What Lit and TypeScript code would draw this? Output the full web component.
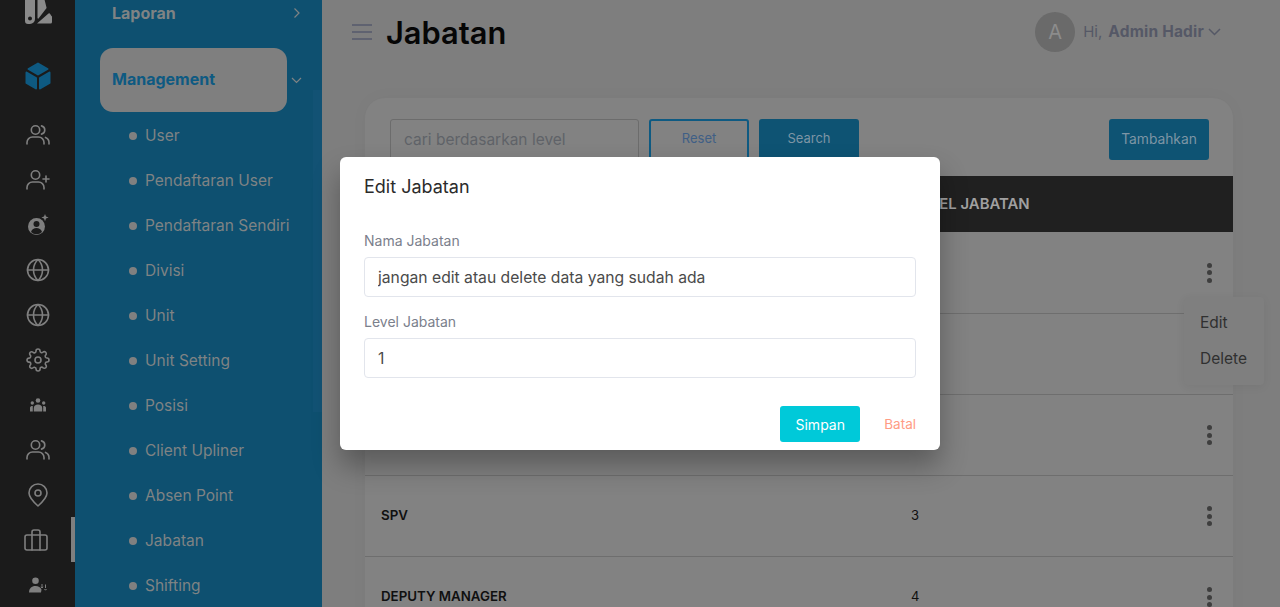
import { LitElement, html, css, svg } from "lit";
import { customElement } from "lit/decorators.js";

// outline icons for the dark rail, all on a 24 box
const line = (body: unknown, size = 24) => html`<svg
  width=${size}
  height=${size}
  viewBox="0 0 24 24"
  fill="none"
  stroke="currentColor"
  stroke-width="1.6"
  stroke-linecap="round"
  stroke-linejoin="round"
>
  ${body}
</svg>`;

const usersIcon = line(svg`
  <circle cx="9.5" cy="7" r="4.2" />
  <path d="M1 21v-1.5a5.5 5.5 0 0 1 5.5-5.5h6a5.5 5.5 0 0 1 5.5 5.5V21" />
  <path d="M15.5 2.9a4.2 4.2 0 0 1 0 8.2" />
  <path d="M19.5 14.4a5.5 5.5 0 0 1 3.5 5.1V21" />
`);
const userPlusIcon = line(svg`
  <circle cx="9.5" cy="7" r="4.2" />
  <path d="M1 21v-1.5a5.5 5.5 0 0 1 5.5-5.5h6a5.5 5.5 0 0 1 5.5 5.5V21" />
  <path d="M20 8v6M17 11h6" />
`);
const userStarIcon = html`<svg width="22" height="22" viewBox="0 0 22 22">
  <circle cx="9.5" cy="12.5" r="8.5" fill="currentColor" />
  <circle cx="9.5" cy="10" r="3" fill="#1b1b1b" />
  <path d="M4 18c1-3 3-4 5.500-4s4.500 1 5.500 4a8 8 0 0 1-11 0z" fill="#1b1b1b" />
  <path d="M18 0l1 2.600 2.600 1-2.600 1-1 2.600-1-2.600-2.600-1 2.600-1z" fill="currentColor" />
</svg>`;
const globeIcon = line(svg`
  <circle cx="12" cy="12" r="10.500" />
  <path d="M1.500 12h21" />
  <path d="M12 1.500c3 2.800 4.500 6.300 4.500 10.500s-1.500 7.700-4.500 10.500c-3-2.800-4.500-6.300-4.500-10.500s1.500-7.700 4.500-10.500z" />
`);
const gearIcon = line(svg`
  <circle cx="12" cy="12" r="3" />
  <path d="M19.400 15a1.650 1.650 0 0 0 .33 1.820l.06.06a2 2 0 0 1 0 2.830 2 2 0 0 1-2.830 0l-.06-.06a1.650 1.650 0 0 0-1.820-.33 1.650 1.650 0 0 0-1 1.510V21a2 2 0 0 1-2 2 2 2 0 0 1-2-2v-.09A1.650 1.650 0 0 0 9 19.400a1.650 1.650 0 0 0-1.820.33l-.06.06a2 2 0 0 1-2.830 0 2 2 0 0 1 0-2.830l.06-.06a1.650 1.650 0 0 0 .33-1.820 1.650 1.650 0 0 0-1.510-1H3a2 2 0 0 1-2-2 2 2 0 0 1 2-2h.09A1.650 1.650 0 0 0 4.600 9a1.650 1.650 0 0 0-.33-1.820l-.06-.06a2 2 0 0 1 0-2.830 2 2 0 0 1 2.830 0l.06.06a1.650 1.650 0 0 0 1.820.33H9a1.650 1.650 0 0 0 1-1.510V3a2 2 0 0 1 2-2 2 2 0 0 1 2 2v.09a1.650 1.650 0 0 0 1 1.510 1.650 1.650 0 0 0 1.820-.33l.06-.06a2 2 0 0 1 2.830 0 2 2 0 0 1 0 2.830l-.06.06a1.650 1.650 0 0 0-.33 1.820V9a1.650 1.650 0 0 0 1.510 1H21a2 2 0 0 1 2 2 2 2 0 0 1-2 2h-.09a1.650 1.650 0 0 0-1.510 1z" />
`);
const groupIcon = html`<svg width="16" height="14" viewBox="0 0 16 14" fill="currentColor">
  <circle cx="8" cy="2.500" r="2.300" />
  <circle cx="2.300" cy="5" r="1.700" />
  <circle cx="13.700" cy="5" r="1.700" />
  <path d="M3.800 13.500v-3.500c0-2 1.800-3.500 4.200-3.500s4.200 1.500 4.200 3.500v3.500z" />
  <path d="M0 13.500v-3.800c0-1 1-1.700 2.800-1.700v5.500zM16 13.500v-3.800c0-1-1-1.700-2.800-1.700v5.500z" />
</svg>`;
const pinIcon = line(svg`
  <path d="M12 23c-5-4.500-9-8.500-9-13a9 9 0 0 1 18 0c0 4.500-4 8.500-9 13z" />
  <circle cx="12" cy="10" r="3" />
`);
const caseIcon = line(svg`
  <rect x="1" y="7" width="22" height="15" rx="2" />
  <path d="M8 22V4a2 2 0 0 1 2-2h4a2 2 0 0 1 2 2v18" />
`);
const userMoveIcon = html`<svg width="18" height="16" viewBox="0 0 18 16" fill="currentColor">
  <circle cx="6.500" cy="3.800" r="3.300" />
  <path d="M0 15.500c0-4 2.500-6.500 6.500-6.500 3 0 5 1.200 6 3.500l-.5 3z" />
  <path
    d="M13 7v4M12 9.800l1 1.200 1-1.200M16.500 11V7.500M15.500 12l1 1.200 1-1.200"
    fill="none"
    stroke="currentColor"
    stroke-width="1"
  />
</svg>`;

const railIcons = [
  usersIcon,
  userPlusIcon,
  userStarIcon,
  globeIcon,
  globeIcon,
  gearIcon,
  groupIcon,
  usersIcon,
  pinIcon,
  caseIcon,
  userMoveIcon,
];

const subMenu = [
  "User",
  "Pendaftaran User",
  "Pendaftaran Sendiri",
  "Divisi",
  "Unit",
  "Unit Setting",
  "Posisi",
  "Client Upliner",
  "Absen Point",
  "Jabatan",
  "Shifting",
];

// the first rows sit behind the dialog, only the last two can be read
const rows = [
  ["", ""],
  ["", ""],
  ["", ""],
  ["SPV", "3"],
  ["DEPUTY MANAGER", "4"],
];

@customElement("app-root")
export class AppRoot extends LitElement {
  static styles = css`
    :host {
      display: flex;
      height: 607px;
      overflow: hidden;
      position: relative;
      background: #7e7e7e;
      font-family: Inter, "Noto Sans", sans-serif;
    }
    * {
      box-sizing: border-box;
    }

    /* icon rail */
    .rail {
      width: 75px;
      flex: none;
      background: #1b1b1b;
      color: #7f7f7f;
      display: flex;
      flex-direction: column;
      align-items: center;
    }
    .logo {
      height: 24px;
      overflow: hidden;
      display: flex;
      align-items: flex-end;
      margin-bottom: 30px;
    }
    .cube {
      height: 46px;
      margin-bottom: 13px;
      display: flex;
      align-items: center;
    }
    .rail-item {
      width: 100%;
      height: 45px;
      flex: none;
      display: flex;
      align-items: center;
      justify-content: center;
    }
    .rail-item.current {
      border-right: 4px solid #7f7f7f;
    }

    /* submenu panel */
    .side {
      width: 247px;
      flex: none;
      background: #0e5070;
      position: relative;
      padding-left: 25px;
      color: #7f8384;
    }
    .thumb {
      position: absolute;
      right: 0;
      top: 90px;
      width: 9px;
      height: 322px;
      background: #125274;
    }
    .top-item {
      height: 28px;
      display: flex;
      align-items: center;
      justify-content: space-between;
      padding: 0 21px 2px 12px;
      font-size: 16px;
      font-weight: 700;
    }
    .active-row {
      display: flex;
      align-items: center;
      margin-top: 20px;
    }
    .active {
      width: 187px;
      height: 64px;
      border-radius: 13px;
      background: #7f7f7f;
      color: #0e5a82;
      font-size: 16px;
      font-weight: 700;
      display: flex;
      align-items: center;
      padding: 0 0 2px 12px;
    }
    .active-row svg {
      margin-left: 4px;
    }
    .sub {
      list-style: none;
      margin: 1px 0 0;
      padding: 0 0 0 29px;
    }
    .sub li {
      height: 45px;
      display: flex;
      align-items: center;
      gap: 8px;
      font-size: 15.500px;
    }
    .sub li::before {
      content: "";
      width: 8px;
      height: 8px;
      border-radius: 50%;
      background: #808080;
    }

    /* main column */
    .main {
      flex: 1;
      min-width: 0;
      padding: 0 47px 0 30px;
    }
    .topbar {
      height: 65px;
      display: flex;
      align-items: center;
      margin-bottom: 33px;
    }
    .burger {
      width: 20px;
      height: 16px;
      margin-top: -2px;
      margin-right: 14px;
      border-top: 2px solid #5f6270;
      border-bottom: 2px solid #5f6270;
      position: relative;
    }
    .burger::after {
      content: "";
      position: absolute;
      left: 0;
      right: 0;
      top: 5px;
      height: 2px;
      background: #5f6270;
    }
    h1 {
      margin: 0;
      font-size: 30.800px;
      font-weight: 600;
      color: #060606;
    }
    .account {
      margin-left: auto;
      margin-right: 12px;
      padding-bottom: 2px;
      display: flex;
      align-items: center;
      font-size: 15px;
      color: #555866;
    }
    .avatar {
      width: 40px;
      height: 40px;
      border-radius: 50%;
      background: #6a6a6a;
      color: #8c8c8c;
      font-size: 20px;
      display: flex;
      align-items: center;
      justify-content: center;
      margin-right: 8px;
    }
    .account b {
      margin-left: 6px;
      margin-right: 4px;
      font-size: 15.500px;
      letter-spacing: 0.2px;
      font-weight: 700;
    }

    /* card */
    .card {
      background: #828282;
      border-radius: 20px 20px 0 0;
      box-shadow: 0 0 18px rgba(0, 0, 0, 0.03);
      height: 560px;
      margin-left: 13px;
    }
    .toolbar {
      display: flex;
      gap: 10px;
      padding: 21px 24px 16px 25px;
    }
    .search {
      width: 249px;
      height: 41px;
      padding: 0 13px;
      border: 1px solid #6c6c6c;
      border-radius: 3px;
      background: transparent;
      font: inherit;
      font-size: 15.500px;
      outline: none;
    }
    .search::placeholder {
      color: #5f6268;
    }
    .btn {
      width: 100px;
      height: 41px;
      border-radius: 3px;
      border: 2px solid #0e5373;
      background: #0e5373;
      color: #7d95a5;
      font: inherit;
      font-size: 13px;
      padding: 0 0 3px;
    }
    .btn.outline {
      background: transparent;
      border-color: #0e5a82;
      color: #3f5f86;
    }
    .btn.add {
      margin-left: auto;
      font-size: 13.800px;
      padding-bottom: 2px;
    }
    table {
      width: 100%;
      border-collapse: collapse;
      table-layout: fixed;
    }
    th {
      height: 56px;
      background: #202020;
      color: #a0a0a0;
      text-align: left;
      font-size: 14.900px;
      font-weight: 600;
      padding: 0 16px 1px;
    }
    th:first-child {
      width: 530px;
    }
    th:last-child {
      width: 60px;
    }
    td {
      height: 81px;
      padding: 0 16px 2px;
      font-size: 13px;
      color: #101010;
      border-bottom: 1px solid #6e6e6e;
    }
    td.name {
      font-weight: 600;
      font-size: 13.300px;
    }
    td.more {
      padding: 1px 0 0;
    }
    .dots {
      width: 5px;
      margin-left: 34px;
      display: flex;
      flex-direction: column;
      gap: 2.500px;
    }
    .dots i {
      width: 5px;
      height: 5px;
      border-radius: 50%;
      background: #3e3e3e;
    }

    /* row action menu */
    .menu {
      position: absolute;
      left: 1184px;
      top: 297px;
      width: 80px;
      height: 88px;
      background: #7f7f7f;
      border-radius: 4px;
      box-shadow: 0 2px 10px rgba(0, 0, 0, 0.06);
      padding: 7px 16px;
      font-size: 15.500px;
      color: #303030;
    }
    .menu div {
      height: 36px;
      display: flex;
      align-items: center;
    }

    /* dialog */
    .dialog {
      position: absolute;
      left: 340px;
      top: 157px;
      width: 600px;
      height: 293px;
      background: #fff;
      border-radius: 6px;
      box-shadow: 0 16px 28px rgba(0, 0, 0, 0.3);
      padding: 0 24px;
    }
    .dialog h2 {
      margin: 0 0 34px;
      padding-top: 19px;
      height: 41px;
      font-size: 18px;
      font-weight: 400;
      line-height: 22px;
      color: #2b2b2b;
    }
    label {
      display: block;
      font-size: 14px;
      line-height: 18px;
      color: #7b808c;
      margin-bottom: 7px;
    }
    .field {
      display: block;
      width: 100%;
      height: 40px;
      border: 1px solid #e2e5ec;
      border-radius: 4px;
      padding: 0 13px;
      font: inherit;
      font-size: 15.700px;
      color: #4a4a4a;
      margin-bottom: 16px;
      outline: none;
    }
    .actions {
      display: flex;
      justify-content: flex-end;
      align-items: center;
      margin-top: 28px;
    }
    .save {
      width: 80px;
      height: 36px;
      border: none;
      border-radius: 3px;
      background: #00c9d9;
      color: #fff;
      font: inherit;
      font-size: 14px;
      padding: 0;
    }
    .cancel {
      margin-left: 24px;
      font-size: 13.500px;
      color: #ff9c84;
    }
  `;

  render() {
    return html`
      <nav class="rail">
        <div class="logo">
          <svg width="28" height="30" viewBox="0 0 28 30" fill="#8a8a8a">
            <path
              fill-rule="evenodd"
              d="M1 0h10v25a5 5 0 0 1-5 5H4a3 3 0 0 1-3-3zM6 22.500a2 2 0 1 0 0 4 2 2 0 0 0 0-4z"
            />
            <path d="M13.500 2h4a3 3 0 0 1 2.500 1.500l2.500 10a1 1 0 0 1-.3 1L14.500 24.500a.6.6 0 0 1-1-.5z" />
            <path d="M13 29.500l11.500-10a1 1 0 0 1 1.300 0l1.700 2.500a1 1 0 0 1 .5 1V28a1.500 1.500 0 0 1-1.500 1.500z" />
          </svg>
        </div>
        <div class="cube">
          <svg width="26" height="28" viewBox="0 0 26 28" fill="#0e5a82">
            <path
              d="M13 1.500l9.500 5.500-9.500 5.500-9.500-5.500z"
              stroke="#0e5a82"
              stroke-width="2"
              stroke-linejoin="round"
            />
            <path
              d="M1.500 10.500l9.500 5.500v10.500l-9.500-5.500z"
              stroke="#0e5a82"
              stroke-width="2"
              stroke-linejoin="round"
            />
            <path
              d="M24.500 10.500l-9.500 5.500v10.500l9.500-5.500z"
              stroke="#0e5a82"
              stroke-width="2"
              stroke-linejoin="round"
            />
          </svg>
        </div>
        ${railIcons.map(
          (icon, i) =>
            html`<div class="rail-item ${i === 9 ? "current" : ""}">${icon}</div>`,
        )}
      </nav>

      <aside class="side">
        <div class="thumb"></div>
        <div class="top-item">
          Laporan
          <svg width="8" height="12" viewBox="0 0 8 12" fill="none" stroke="currentColor" stroke-width="1.200">
            <path d="M1.500 1.500L6 6l-4.500 4.500" />
          </svg>
        </div>
        <div class="active-row">
          <div class="active">Management</div>
          <svg width="11" height="7" viewBox="0 0 11 7" fill="none" stroke="currentColor" stroke-width="1.200">
            <path d="M1 1l4.500 4.500L10 1" />
          </svg>
        </div>
        <ul class="sub">
          ${subMenu.map((item) => html`<li>${item}</li>`)}
        </ul>
      </aside>

      <main class="main">
        <header class="topbar">
          <div class="burger"></div>
          <h1>Jabatan</h1>
          <div class="account">
            <div class="avatar">A</div>
            Hi,
            <b>Admin Hadir</b>
            <svg width="13" height="8" viewBox="0 0 13 8" fill="none" stroke="currentColor" stroke-width="1.500">
              <path d="M1 1l5.500 5.500L12 1" />
            </svg>
          </div>
        </header>
        <section class="card">
          <div class="toolbar">
            <input class="search" placeholder="cari berdasarkan level" />
            <button class="btn outline">Reset</button>
            <button class="btn">Search</button>
            <button class="btn add">Tambahkan</button>
          </div>
          <table>
            <thead>
              <tr>
                <th>NAMA JABATAN</th>
                <th>LEVEL JABATAN</th>
                <th></th>
              </tr>
            </thead>
            <tbody>
              ${rows.map(
                ([name, level]) => html`<tr>
                  <td class="name">${name}</td>
                  <td>${level}</td>
                  <td class="more">
                    <div class="dots"><i></i><i></i><i></i></div>
                  </td>
                </tr>`,
              )}
            </tbody>
          </table>
        </section>
      </main>

      <div class="menu">
        <div>Edit</div>
        <div>Delete</div>
      </div>

      <div class="dialog">
        <h2>Edit Jabatan</h2>
        <label>Nama Jabatan</label>
        <input class="field" value="jangan edit atau delete data yang sudah ada" />
        <label>Level Jabatan</label>
        <input class="field" value="1" />
        <div class="actions">
          <button class="save">Simpan</button>
          <span class="cancel">Batal</span>
        </div>
      </div>
    `;
  }
}
